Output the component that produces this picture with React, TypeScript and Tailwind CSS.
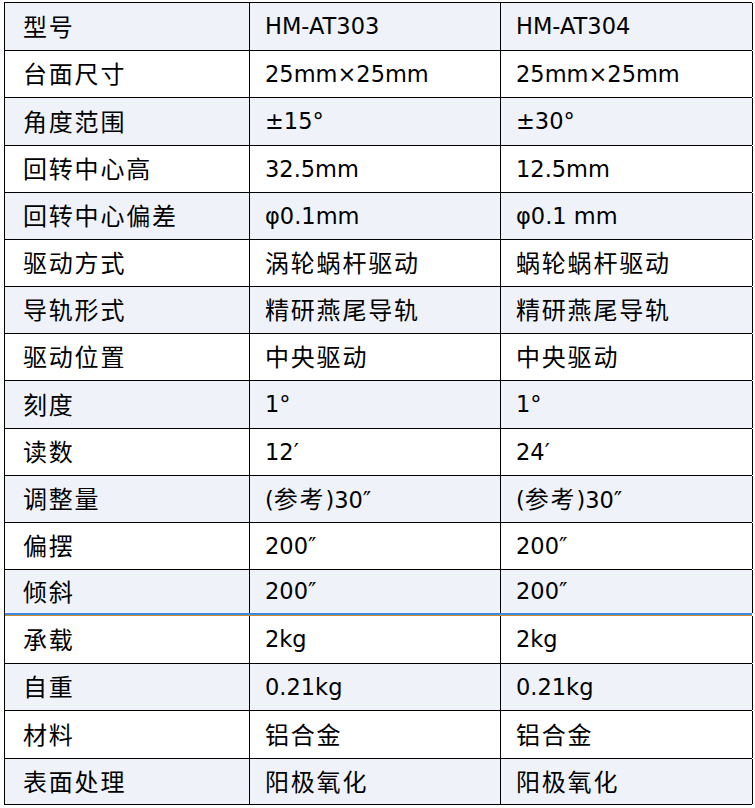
const rows: { cells: [string, string, string]; h: string; light: boolean; border: string }[] = [
  { cells: ["型号", "HM-AT303", "HM-AT304"], h: "h-[48px]", light: true, border: "border-b border-black" },
  { cells: ["台面尺寸", "25mm×25mm", "25mm×25mm"], h: "h-[47px]", light: false, border: "border-b border-black" },
  { cells: ["角度范围", "±15°", "±30°"], h: "h-[48px]", light: true, border: "border-b border-black" },
  { cells: ["回转中心高", "32.5mm", "12.5mm"], h: "h-[47px]", light: false, border: "border-b border-black" },
  { cells: ["回转中心偏差", "φ0.1mm", "φ0.1 mm"], h: "h-[47px]", light: true, border: "border-b border-black" },
  { cells: ["驱动方式", "涡轮蜗杆驱动", "蜗轮蜗杆驱动"], h: "h-[47px]", light: false, border: "border-b border-black" },
  { cells: ["导轨形式", "精研燕尾导轨", "精研燕尾导轨"], h: "h-[47px]", light: true, border: "border-b border-black" },
  { cells: ["驱动位置", "中央驱动", "中央驱动"], h: "h-[47px]", light: false, border: "border-b border-black" },
  { cells: ["刻度", "1°", "1°"], h: "h-[48px]", light: true, border: "border-b border-black" },
  { cells: ["读数", "12′", "24′"], h: "h-[47px]", light: false, border: "border-b border-black" },
  { cells: ["调整量", "(参考)30″", "(参考)30″"], h: "h-[47px]", light: true, border: "border-b border-black" },
  { cells: ["偏摆", "200″", "200″"], h: "h-[47px]", light: false, border: "border-b border-black" },
  { cells: ["倾斜", "200″", "200″"], h: "h-[45px]", light: true, border: "border-b-2 border-[#3d8be0]" },
  { cells: ["承载", "2kg", "2kg"], h: "h-[48px]", light: false, border: "border-b border-black" },
  { cells: ["自重", "0.21kg", "0.21kg"], h: "h-[47px]", light: true, border: "border-b border-black" },
  { cells: ["材料", "铝合金", "铝合金"], h: "h-[48px]", light: false, border: "border-b border-black" },
  { cells: ["表面处理", "阳极氧化", "阳极氧化"], h: "h-[46px]", light: true, border: "border-b border-black" },
];

// CJK runs get their own size and spacing, Latin stays in DejaVu
function Text({ value }: { value: string }) {
  const parts = value.split(/([\u4e00-\u9fff]+)/).filter(Boolean);
  return (
    <span className="whitespace-nowrap">
      {parts.map((p, i) =>
        /[\u4e00-\u9fff]/.test(p) ? (
          <span key={i} className="text-[24px] tracking-[1.8px] font-['Noto_Sans_CJK_SC',sans-serif]">
            {p}
          </span>
        ) : (
          <span key={i}>{p}</span>
        )
      )}
    </span>
  );
}

export default function App() {
  return (
    <div className="w-[755px] h-[808px] bg-white pt-[2px] pl-[4px] text-black text-[22.5px] font-['DejaVu_Sans','Noto_Sans_CJK_SC',sans-serif]">
      <div className="w-[748px] border-t border-l border-black">
        {rows.map((r) => (
          <div key={r.cells[0]}>
            <div className={`flex ${r.h} ${r.border} ${r.light ? "bg-[#eff3f9]" : "bg-white"}`}>
              <div className="w-[245px] shrink-0 border-r border-black flex items-center pl-[18px] leading-none">
                <Text value={r.cells[0]} />
              </div>
              <div className="w-[251px] shrink-0 border-r border-black flex items-center pl-[15px] leading-none">
                <Text value={r.cells[1]} />
              </div>
              <div className="w-[252px] shrink-0 border-r border-black flex items-center pl-[15px] leading-none">
                <Text value={r.cells[2]} />
              </div>
            </div>
            {r.cells[0] === "倾斜" && <div className="h-px bg-[#cf8a2e]" />}
          </div>
        ))}
      </div>
    </div>
  );
}
